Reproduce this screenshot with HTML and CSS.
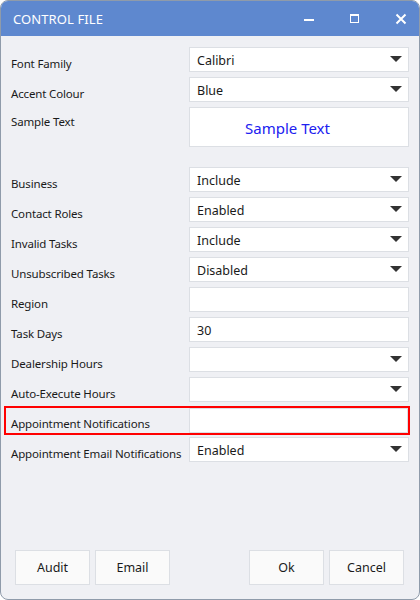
FILE: index.html
```html
<!DOCTYPE html>
<html>
<head>
    <title>Control File</title>
    <link rel="stylesheet" href="styles.css">
</head>
<body>
    <div class="window">
        <div class="title-bar">
            <span class="title">CONTROL FILE</span>
            <div class="title-buttons">
                <svg class="tb-btn" width="12" height="12" viewBox="0 0 12 12"><rect x="1" y="6" width="10" height="2" fill="#fff"/></svg>
                <svg class="tb-btn" width="12" height="12" viewBox="0 0 12 12"><rect x="1.5" y="1.5" width="8" height="8" fill="none" stroke="#fff"/><rect x="1" y="1" width="9" height="2" fill="#fff"/></svg>
                <svg class="tb-btn" width="12" height="12" viewBox="0 0 12 12"><path d="M1.5 1.5 L10.5 10.5 M10.5 1.5 L1.5 10.5" stroke="#fff" stroke-width="2"/></svg>
            </div>
        </div>

        <div class="form">
            <div class="row">
                <label>Font Family</label>
                <div class="field select">Calibri</div>
            </div>
            <div class="row">
                <label>Accent Colour</label>
                <div class="field select">Blue</div>
            </div>
            <div class="row sample-row">
                <label>Sample Text</label>
                <div class="field sample">Sample Text</div>
            </div>

            <div class="row spaced">
                <label>Business</label>
                <div class="field select">Include</div>
            </div>
            <div class="row">
                <label>Contact Roles</label>
                <div class="field select">Enabled</div>
            </div>
            <div class="row">
                <label>Invalid Tasks</label>
                <div class="field select">Include</div>
            </div>
            <div class="row">
                <label>Unsubscribed Tasks</label>
                <div class="field select">Disabled</div>
            </div>
            <div class="row">
                <label>Region</label>
                <div class="field"></div>
            </div>
            <div class="row">
                <label>Task Days</label>
                <div class="field">30</div>
            </div>
            <div class="row">
                <label>Dealership Hours</label>
                <div class="field select"></div>
            </div>
            <div class="row">
                <label>Auto-Execute Hours</label>
                <div class="field select"></div>
            </div>
            <div class="row flagged">
                <label>Appointment Notifications</label>
                <div class="field"></div>
            </div>
            <div class="row">
                <label>Appointment Email Notifications</label>
                <div class="field select">Enabled</div>
            </div>
        </div>

        <div class="footer">
            <div class="btn-group">
                <button class="btn">Audit</button>
                <button class="btn">Email</button>
            </div>
            <div class="btn-group">
                <button class="btn">Ok</button>
                <button class="btn">Cancel</button>
            </div>
        </div>
    </div>
</body>
</html>
```

FILE: styles.css
```css
body {
    margin: 0;
    font-family: "Noto Sans", "Open Sans", sans-serif;
    font-size: 12px;
    color: #1a1a1a;
    background: #ffffff;
}
.window {
    width: 420px;
    height: 600px;
    box-sizing: border-box;
    border: 1px solid #8f9baa;
    border-radius: 8px;
    overflow: hidden;
    background: #eff0f4;
    display: flex;
    flex-direction: column;
}
.title-bar {
    height: 35px;
    flex-shrink: 0;
    background: #5e88cf;
    color: #fff;
    display: flex;
    align-items: center;
    justify-content: space-between;
    padding: 0 12px 0 12px;
}
.title {
    font-size: 13px;
    letter-spacing: 0.1px;
}
.title-buttons {
    display: flex;
    gap: 34px;
    padding-top: 1px;
}
.tb-btn {
    display: block;
}
.form {
    display: flex;
    flex-direction: column;
    gap: 5px;
    padding: 11px 10px 0 10px;
}
.row {
    display: grid;
    grid-template-columns: 178px 1fr;
    height: 25px;
}
.row label {
    align-self: end;
    padding-bottom: 1px;
    white-space: nowrap;
    font-size: 11.5px;
    letter-spacing: -0.15px;
}
.sample-row {
    height: 40px;
}
.sample-row label {
    align-self: start;
    padding-top: 7px;
}
.spaced {
    margin-top: 15px;
}
.field {
    box-sizing: border-box;
    background: #fff;
    border: 1px solid #dcdfe4;
    padding: 1px 7px 0 7px;
    display: flex;
    align-items: center;
    font-size: 12.5px;
    position: relative;
}
.select::after {
    content: "";
    position: absolute;
    right: 6px;
    top: 8px;
    border-left: 6px solid transparent;
    border-right: 6px solid transparent;
    border-top: 6px solid #333;
}
.sample {
    justify-content: center;
    padding-right: 30px;
    color: #2020f0;
    font-size: 15px;
}
.flagged {
    box-sizing: border-box;
    height: 29px;
    margin: -1px -1px -3px -7px;
    border: 2px solid #f00;
    grid-template-columns: 183px 1fr;
}
.flagged label {
    padding-left: 5px;
    padding-bottom: 2px;
}
.footer {
    margin-top: auto;
    display: flex;
    justify-content: space-between;
    padding: 0 15px 14px 14px;
}
.btn-group {
    display: flex;
    gap: 5px;
}
.btn {
    width: 75px;
    height: 35px;
    background: #fafafa;
    border: 1px solid #dcdfe4;
    font-family: inherit;
    font-size: 12.5px;
    color: #1a1a1a;
    padding: 0;
}
```
